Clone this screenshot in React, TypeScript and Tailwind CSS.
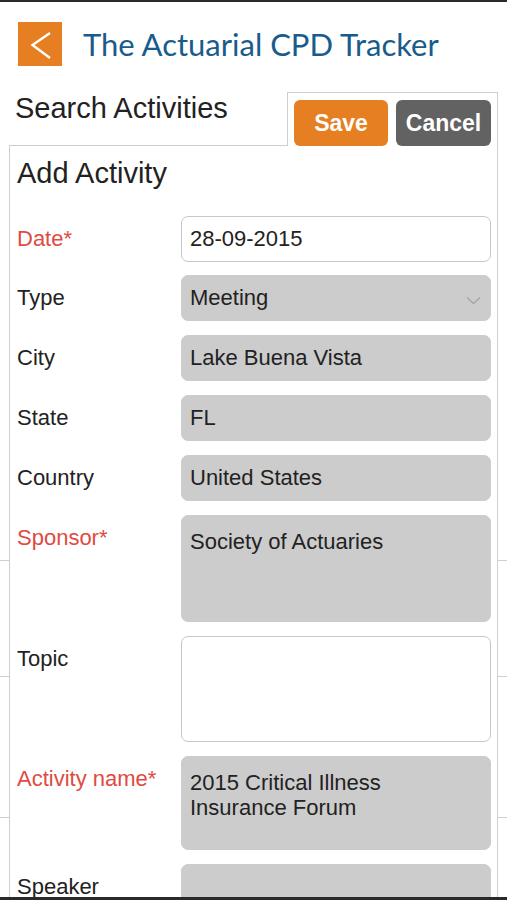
import React from "react";

const SANS = { fontFamily: '"Liberation Sans", Arial, sans-serif' };

function Label({ text, req }: { text: string; req?: boolean }) {
  return (
    <div
      className={`w-[164px] shrink-0 text-[22px] leading-[46px] ${req ? "text-[#df4a42]" : "text-[#222]"}`}
    >
      {text}
    </div>
  );
}

function Field({
  label,
  req,
  value,
  white,
  select,
  tight,
}: {
  label: string;
  req?: boolean;
  value?: string;
  white?: boolean;
  select?: boolean;
  tight?: boolean;
}) {
  return (
    <div className={`flex ${tight ? "-mt-[1px]" : ""}`}>
      <Label text={label} req={req} />
      <div
        className={`relative flex-1 h-[46px] rounded-[7px] border px-[8px] text-[22px] leading-[44px] text-[#222] ${
          white ? "bg-white border-[#c8c8c8]" : "bg-[#cccccc] border-[#cccccc]"
        }`}
      >
        {value}
        {select && (
          <svg
            className="absolute right-[9px] top-[20px]"
            width="15"
            height="9"
            viewBox="0 0 15 9"
          >
            <path d="M1 1.5 L7.5 7.5 L14 1.5" fill="none" stroke="#a5a5a5" strokeWidth="1.3" />
          </svg>
        )}
      </div>
    </div>
  );
}

function Area({
  label,
  req,
  lines,
  white,
  h,
}: {
  label: string;
  req?: boolean;
  lines?: string[];
  white?: boolean;
  h: string;
}) {
  return (
    <div className="flex">
      <Label text={label} req={req} />
      <div
        className={`flex-1 ${h} rounded-[7px] border px-[8px] pt-[13px] text-[22px] leading-[25px] text-[#222] ${
          white ? "bg-white border-[#c8c8c8]" : "bg-[#cccccc] border-[#cccccc]"
        }`}
      >
        {lines?.map((l) => (
          <div key={l}>{l}</div>
        ))}
      </div>
    </div>
  );
}

export default function App() {
  return (
    <div className="relative w-[507px] h-[900px] overflow-hidden bg-white" style={SANS}>
      <div className="h-[2px] bg-[#2a2a2a]" />
      {/* header */}
      <div className="flex items-center pl-[18px] pt-[20px]">
        <div className="w-[44px] h-[44px] bg-[#e67e22] flex items-center justify-center">
          <svg width="44" height="44" viewBox="0 0 44 44">
            <path d="M32 11 L14.5 23 L32 36" fill="none" stroke="#fff" strokeWidth="2.4" />
          </svg>
        </div>
        <div
          className="ml-[21px] text-[31px] leading-[36px] text-[#185b8c]"
          style={{ fontFamily: 'Lato, "Open Sans", sans-serif' }}
        >
          The Actuarial CPD Tracker
        </div>
      </div>
      <div className="mt-[26px] pl-[15px] text-[29px] leading-[32px] text-[#222]">Search Activities</div>
      {/* background list */}
      <div className="flex flex-col">
        <div className="h-[437px] border-b border-[#cfcfcf]" />
        <div className="h-[116px] border-b border-[#cfcfcf]" />
        <div className="h-[141px] border-b border-[#cfcfcf]" />
      </div>

      {/* modal */}
      <div className="absolute left-[9px] top-[92px] w-[489px] bottom-0 flex flex-col">
        <div className="flex h-[55px]">
          <div className="w-[278px] border-b border-[#cfcfcf]" />
          <div className="flex-1 bg-white border-t border-l border-r border-[#cfcfcf] pt-[7px] pl-[6px] pr-[6px] flex gap-[8px]">
            <button className="w-[94px] h-[46px] rounded-[6px] bg-[#e67e22] text-white font-bold text-[23px]">
              Save
            </button>
            <button className="w-[95px] h-[46px] rounded-[6px] bg-[#626262] text-white font-bold text-[23px]">
              Cancel
            </button>
          </div>
        </div>
        <div className="flex-1 bg-white border-l border-r border-[#cfcfcf] pl-[7px] pr-[6px] pt-[11px]">
          <div className="text-[29px] leading-[32px] text-[#222]">Add Activity</div>
          <div className="mt-[27px] flex flex-col gap-[14px]">
            <Field label="Date*" req value="28-09-2015" white />
            <Field label="Type" value="Meeting" select tight />
            <Field label="City" value="Lake Buena Vista" />
            <Field label="State" value="FL" />
            <Field label="Country" value="United States" />
            <Area label="Sponsor*" req lines={["Society of Actuaries"]} h="h-[107px]" />
            <Area label="Topic" white h="h-[106px]" />
            <Area
              label="Activity name*"
              req
              lines={["2015 Critical Illness", "Insurance Forum"]}
              h="h-[94px]"
            />
            <Area label="Speaker" h="h-[94px]" />
          </div>
        </div>
      </div>
      <div className="absolute left-0 right-0 bottom-0 h-[3px] bg-[#2a2a2a]" />
    </div>
  );
}
